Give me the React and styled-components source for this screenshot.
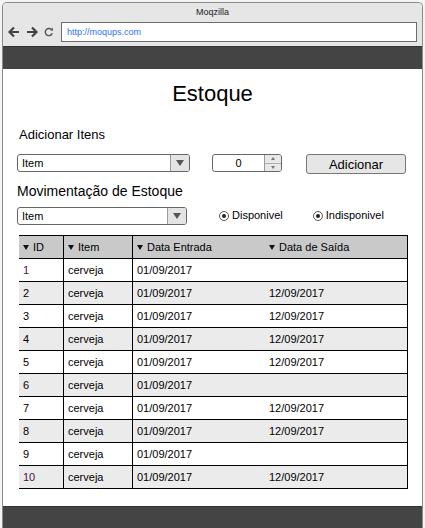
import styled, { createGlobalStyle } from "styled-components";

const GlobalStyle = createGlobalStyle`
    html, body {
        margin: 0;
        padding: 0;
        background: #f4f4f4;
    }
    body {
        font-family: "Liberation Sans", Arial, sans-serif;
        color: #000;
    }
`;

const Frame = styled.div`
    width: 419px;
    height: 525px;
    margin: 2px 0 0 2px;
    border: 1px solid #8a8a8a;
    border-bottom: none;
    border-radius: 5px 5px 0 0;
    overflow: hidden;
    display: flex;
    flex-direction: column;
    background: #fff;
`;

const TitleBar = styled.div`
    background: #e6e6e6;
    height: 43px;
    display: flex;
    flex-direction: column;
`;

const WindowTitle = styled.div`
    height: 19px;
    line-height: 19px;
    text-align: center;
    font-size: 9px;
    color: #222;
`;

const AddressRow = styled.div`
    display: flex;
    align-items: center;
    padding-left: 4px;
    gap: 4px;
`;

const NavIcon = styled.svg`
    width: ${(p) => p.$w || 14}px;
    height: 14px;
    flex: none;
`;

const Address = styled.div`
    margin-left: 2px;
    width: 349px;
    height: 18px;
    border: 1px solid #6b6b6b;
    background: #fff;
    font-size: 9px;
    line-height: 18px;
    padding-left: 5px;
    box-sizing: content-box;
    color: #2f6ff2;
`;

const DarkBar = styled.div`
    background: #444;
    border-top: 1px solid #333;
    height: ${(p) => p.$h}px;
    flex: none;
`;

const Content = styled.div`
    flex: 1;
    padding: 11px 0 0 14px;
    display: flex;
    flex-direction: column;
`;

const PageTitle = styled.h1`
    margin: 0;
    font-size: 22px;
    font-weight: 400;
    line-height: 28px;
    text-align: center;
    padding-right: 14px;
`;

const SectionTitle = styled.h2`
    margin: ${(p) => p.$m};
    font-size: ${(p) => p.$size}px;
    font-weight: 400;
    line-height: 17px;
    padding-left: ${(p) => p.$pl || 0}px;
`;

const Controls = styled.div`
    display: flex;
    align-items: center;
    height: 20px;
    margin-top: ${(p) => p.$mt}px;
`;

const Select = styled.div`
    width: ${(p) => p.$w}px;
    height: 18px;
    box-sizing: border-box;
    border: 1px solid #666;
    border-radius: 3px;
    display: flex;
    overflow: hidden;
    background: #fff;
    align-self: flex-start;
`;

const SelectLabel = styled.span`
    flex: 1;
    font-size: 11px;
    line-height: 16px;
    padding-left: 4px;
`;

const SelectArrow = styled.span`
    width: 18px;
    border-left: 1px solid #9a9a9a;
    background: #e4e4e4;
    display: flex;
    align-items: center;
    justify-content: center;
    &::after {
        content: "";
        border-left: 4px solid transparent;
        border-right: 4px solid transparent;
        border-top: 6px solid #555;
    }
`;

const Spinner = styled.div`
    margin-left: 22px;
    width: 70px;
    height: 18px;
    box-sizing: border-box;
    border: 1px solid #666;
    border-radius: 3px;
    display: flex;
    overflow: hidden;
    align-self: flex-start;
`;

const SpinValue = styled.span`
    flex: 1;
    text-align: center;
    font-size: 11px;
    line-height: 16px;
`;

const SpinButtons = styled.span`
    width: 16px;
    border-left: 1px solid #9a9a9a;
    background: #e8e8e8;
    display: flex;
    flex-direction: column;
`;

const SpinHalf = styled.span`
    flex: 1;
    display: flex;
    align-items: center;
    justify-content: center;
    border-top: ${(p) => (p.$down ? "1px solid #b0b0b0" : "none")};
    &::after {
        content: "";
        border-left: 2.5px solid transparent;
        border-right: 2.5px solid transparent;
        ${(p) => (p.$down ? "border-top: 3px solid #777;" : "border-bottom: 3px solid #777;")}
    }
`;

const Button = styled.button`
    margin-left: 24px;
    width: 100px;
    height: 20px;
    border: 1px solid #777;
    border-radius: 3px;
    background: #e6e6e6;
    font-family: inherit;
    font-size: 13px;
    padding: 0;
    color: #000;
`;

const Radio = styled.label`
    display: flex;
    align-items: center;
    font-size: 11px;
    margin-left: ${(p) => p.$ml}px;
    align-self: flex-start;
    line-height: 17px;
`;

const RadioDot = styled.span`
    width: 10px;
    height: 10px;
    box-sizing: border-box;
    border: 1px solid #555;
    border-radius: 50%;
    margin-right: 3px;
    display: flex;
    align-items: center;
    justify-content: center;
    &::after {
        content: "";
        width: 4px;
        height: 4px;
        border-radius: 50%;
        background: #222;
    }
`;

const Table = styled.div`
    margin: 8px 0 0 2px;
    width: 388px;
    border-right: 1px solid #000;
    border-top: 1px solid #000;
`;

const Row = styled.div`
    display: grid;
    grid-template-columns: 45px 69px 132px 1fr;
    height: 22px;
    border-bottom: 1px solid #000;
    background: ${(p) => (p.$head ? "#c9c9c9" : p.$alt ? "#ebebeb" : "#fff")};
`;

const Cell = styled.div`
    font-size: 11px;
    line-height: 22px;
    padding-left: 4px;
    border-right: ${(p) => (p.$line ? "1px solid #000" : "none")};
    color: ${(p) => p.$color || "#000"};
    display: flex;
    align-items: center;
    gap: 4px;
    white-space: nowrap;
`;

const SortMark = styled.span`
    border-left: 3px solid transparent;
    border-right: 3px solid transparent;
    border-top: 5px solid #111;
    margin-top: 1px;
`;

const rows = [
    { id: 1, item: "cerveja", in: "01/09/2017", out: "" },
    { id: 2, item: "cerveja", in: "01/09/2017", out: "12/09/2017" },
    { id: 3, item: "cerveja", in: "01/09/2017", out: "12/09/2017" },
    { id: 4, item: "cerveja", in: "01/09/2017", out: "12/09/2017" },
    { id: 5, item: "cerveja", in: "01/09/2017", out: "12/09/2017" },
    { id: 6, item: "cerveja", in: "01/09/2017", out: "" },
    { id: 7, item: "cerveja", in: "01/09/2017", out: "12/09/2017" },
    { id: 8, item: "cerveja", in: "01/09/2017", out: "12/09/2017" },
    { id: 9, item: "cerveja", in: "01/09/2017", out: "" },
    { id: 10, item: "cerveja", in: "01/09/2017", out: "12/09/2017" },
];

const Estoque = () => {
    return (
        <>
            <GlobalStyle />
            <Frame>
                <TitleBar>
                    <WindowTitle>Moqzilla</WindowTitle>
                    <AddressRow>
                        <NavIcon viewBox="0 0 14 14">
                            <path d="M12 7H3M7 2.5L2.5 7L7 11.5" fill="none" stroke="#444" strokeWidth="2.2" />
                        </NavIcon>
                        <NavIcon viewBox="0 0 14 14">
                            <path d="M2 7h9M7 2.5L11.5 7L7 11.5" fill="none" stroke="#444" strokeWidth="2.2" />
                        </NavIcon>
                        <NavIcon viewBox="0 0 14 14" $w={12}>
                            <path d="M10.5 5A4.2 4.2 0 1 0 10.8 8.5" fill="none" stroke="#555" strokeWidth="1.6" />
                            <path d="M8 4.6L11.6 5.6L11.3 1.8Z" fill="#555" />
                        </NavIcon>
                        <Address>http://moqups.com</Address>
                    </AddressRow>
                </TitleBar>
                <DarkBar $h={22} />
                <Content>
                    <PageTitle>Estoque</PageTitle>
                    <SectionTitle $size={13} $m="18px 0 0 0" $pl={2}>Adicionar Itens</SectionTitle>
                    <Controls $mt={11}>
                        <Select $w={173}>
                            <SelectLabel>Item</SelectLabel>
                            <SelectArrow />
                        </Select>
                        <Spinner>
                            <SpinValue>0</SpinValue>
                            <SpinButtons>
                                <SpinHalf />
                                <SpinHalf $down />
                            </SpinButtons>
                        </Spinner>
                        <Button>Adicionar</Button>
                    </Controls>
                    <SectionTitle $size={14} $m="9px 0 0 0">Movimentação de Estoque</SectionTitle>
                    <Controls $mt={7}>
                        <Select $w={170}>
                            <SelectLabel>Item</SelectLabel>
                            <SelectArrow />
                        </Select>
                        <Radio $ml={32}>
                            <RadioDot />
                            Disponivel
                        </Radio>
                        <Radio $ml={30}>
                            <RadioDot />
                            Indisponivel
                        </Radio>
                    </Controls>
                    <Table>
                        <Row $head>
                            <Cell $line><SortMark />ID</Cell>
                            <Cell $line><SortMark />Item</Cell>
                            <Cell><SortMark />Data Entrada</Cell>
                            <Cell><SortMark />Data de Saída</Cell>
                        </Row>
                        {rows.map((r, i) => (
                            <Row key={r.id} $alt={i % 2 === 1}>
                                <Cell $line $color={r.id === 1 || r.id === 10 ? "#4a1245" : "#000"}>{r.id}</Cell>
                                <Cell $line>{r.item}</Cell>
                                <Cell>{r.in}</Cell>
                                <Cell>{r.out}</Cell>
                            </Row>
                        ))}
                    </Table>
                </Content>
                <DarkBar $h={21} />
            </Frame>
        </>
    );
};

export default Estoque;
